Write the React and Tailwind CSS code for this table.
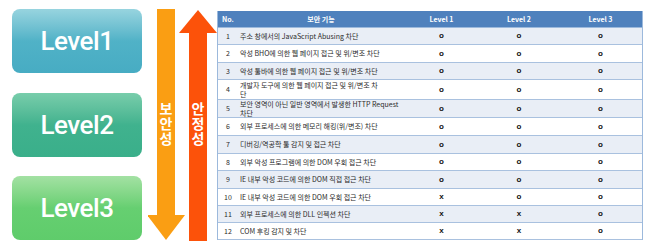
import React from 'react';

const levels = [
  { name: 'Level1', cls: 'from-[#97d4df] via-[#50b2c7] to-[#47acc3]' },
  { name: 'Level2', cls: 'from-[#78cdab] via-[#40b28e] to-[#3aaf8a]' },
  { name: 'Level3', cls: 'from-[#a3e1a3] via-[#66cf71] to-[#5fcc6b]' },
];

const rows = [
  { no: 1, text: ['주소 창에서의 JavaScript Abusing 차단'], m: ['o', 'o', 'o'], h: 'h-[17px]' },
  { no: 2, text: ['악성 BHO에 의한 웹 페이지 접근 및 위/변조 차단'], m: ['o', 'o', 'o'], h: 'h-[18px]' },
  { no: 3, text: ['악성 툴바에 의한 웹 페이지 접근 및 위/변조 차단'], m: ['o', 'o', 'o'], h: 'h-[17px]' },
  { no: 4, text: ['개발자 도구에 의한 웹 페이지 접근 및 위/변조 차', '단'], m: ['o', 'o', 'o'], h: 'h-[20px]' },
  { no: 5, text: ['보안 영역이 아닌 일반 영역에서 발생한 HTTP Request', '차단'], m: ['o', 'o', 'o'], h: 'h-[18px]' },
  { no: 6, text: ['외부 프로세스에 의한 메모리 해킹(위/변조) 차단'], m: ['o', 'o', 'o'], h: 'h-[18px]' },
  { no: 7, text: ['디버깅/역공학 툴 감지 및 접근 차단'], m: ['o', 'o', 'o'], h: 'h-[18px]' },
  { no: 8, text: ['외부 악성 프로그램에 의한 DOM 우회 접근 차단'], m: ['o', 'o', 'o'], h: 'h-[17px]' },
  { no: 9, text: ['IE 내부 악성 코드에 의한 DOM 직접 접근 차단'], m: ['o', 'o', 'o'], h: 'h-[18px]' },
  { no: 10, text: ['IE 내부 악성 코드에 의한 DOM 우회 접근 차단'], m: ['x', 'o', 'o'], h: 'h-[17px]' },
  { no: 11, text: ['외부 프로세스에 의한 DLL 인젝션 차단'], m: ['x', 'x', 'o'], h: 'h-[17px]' },
  { no: 12, text: ['COM 후킹 감지 및 차단'], m: ['x', 'x', 'o'], h: 'h-[17px]' },
];

const grid = 'grid grid-cols-[20px_166px_75px_80px_83px] items-center';

function VerticalLabel({ text, left }) {
  return (
    <div
      className={`absolute ${left} w-[18px] top-[93px] flex justify-center text-white font-bold text-[14px] leading-[18px] tracking-[1px] [writing-mode:vertical-rl]`}
      style={{ fontFamily: '"Noto Sans CJK KR", sans-serif' }}
    >
      {text}
    </div>
  );
}

export default function App() {
  return (
    <div className="w-[650px] h-[252px] bg-white flex items-start pl-[12px] overflow-hidden">
      {/* level boxes */}
      <div className="w-[130px] mt-[9px] flex flex-col">
        {levels.map((l, i) => (
          <div
            key={l.name}
            className={`h-[64px] rounded-[8px] bg-linear-to-b ${l.cls} flex items-center justify-center text-white text-[26px] font-medium tracking-[-0.5px] ${i === 1 ? 'mt-[20px]' : i === 2 ? 'mt-[19px]' : ''}`}
            style={{ fontFamily: 'Roboto, "Noto Sans", sans-serif' }}
          >
            {l.name}
          </div>
        ))}
      </div>

      {/* arrows */}
      <div className="relative ml-[6px] mt-[9px] w-[69px] h-[232px]">
        <svg width="69" height="232" viewBox="0 0 69 232" className="block">
          <rect x="9" y="0" width="18" height="207" fill="#fa9e13" />
          <polygon points="-1,206 37,206 18,231" fill="#fa9e13" />
          <rect x="41" y="24" width="18" height="208" fill="#fc520a" />
          <polygon points="31,24 69,24 50,1" fill="#fc520a" />
        </svg>
        <VerticalLabel text="보안성" left="left-[9px]" />
        <VerticalLabel text="안정성" left="left-[41px]" />
      </div>

      {/* table */}
      <div
        className="mt-[11px] w-[426px] border-x border-[#9cb9dc] text-[7px] text-[#2b2b2b]"
        style={{ fontFamily: '"Noto Sans CJK KR", "Liberation Sans", sans-serif' }}
      >
        <div className={`${grid} h-[17px] bg-[#4f81bd] text-white font-bold border-b border-[#9cb9dc]`}>
          <div className="text-center">No.</div>
          <div className="text-center">보안 기능</div>
          <div className="text-center">Level 1</div>
          <div className="text-center">Level 2</div>
          <div className="text-center">Level 3</div>
        </div>
        {rows.map((r) => (
          <div
            key={r.no}
            className={`${grid} ${r.h} border-b border-[#a9c1df] ${r.no % 2 === 1 ? 'bg-[#e9eef6]' : 'bg-white'}`}
          >
            <div className="text-center">{r.no}</div>
            <div className="pl-[2px] leading-[8.5px] whitespace-nowrap">
              {r.text.map((t, i) => (
                <div key={i}>{t}</div>
              ))}
            </div>
            {r.m.map((m, i) => (
              <div
                key={i}
                className="text-center font-bold text-[8px] leading-none text-[#111]"
                style={{ fontFamily: '"Liberation Sans", sans-serif' }}
              >
                {m}
              </div>
            ))}
          </div>
        ))}
      </div>
    </div>
  );
}
